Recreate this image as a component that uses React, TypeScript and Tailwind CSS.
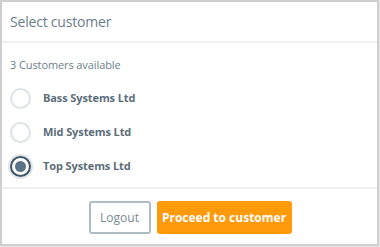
import { useState } from 'react';

const customers = ['Bass Systems Ltd', 'Mid Systems Ltd', 'Top Systems Ltd'];

export default function App() {
  const [selected, setSelected] = useState(2);

  return (
    <div className="w-[380px] h-[247px] bg-[#e6e6e6] font-['Open_Sans',sans-serif]">
      <div className="w-[379px] h-[246px] bg-white border-2 border-[#cfcfcf] flex flex-col">
        {/* Header */}
        <div className="h-[41px] flex items-center px-[8px] border-b-2 border-[#f0f0f0]">
          <h1 className="text-[14px] text-[#6b7d89] tracking-[-0.2px]">Select customer</h1>
        </div>

        {/* Body */}
        <div className="flex-1 px-[8px] border-b-2 border-[#f0f0f0]">
          <p className="mt-[14px] text-[11px] text-[#6e7f8a] tracking-[-0.1px]">3 Customers available</p>
          <div className="mt-[14px] flex flex-col gap-[13px]">
            {customers.map((name, i) => {
              const active = i === selected;
              return (
                <button
                  key={name}
                  onClick={() => setSelected(i)}
                  className="flex items-center gap-[12px] text-left"
                >
                  <span
                    className={`w-[21px] h-[21px] rounded-full flex items-center justify-center ${
                      active
                        ? 'border-2 border-[#3f5566] shadow-[0_0_0_2px_#dfe5e9]'
                        : 'border-2 border-[#dde3e7]'
                    }`}
                  >
                    {active && <span className="w-[11px] h-[11px] rounded-full bg-[#5a7385]" />}
                  </span>
                  <span className="text-[11px] font-bold text-[#5b6d79] tracking-[-0.1px]">{name}</span>
                </button>
              );
            })}
          </div>
        </div>

        {/* Footer */}
        <div className="h-[55px] flex items-start justify-center gap-[6px] pt-[12px] pl-[1px]">
          <button className="w-[62px] h-[33px] border-2 border-[#aebcc6] rounded-[3px] text-[12px] text-[#7b8c97]">
            Logout
          </button>
          <button className="w-[135px] h-[33px] bg-[#ff9a0a] rounded-[3px] text-[12px] font-bold text-white">
            Proceed to customer
          </button>
        </div>
      </div>
    </div>
  );
}
